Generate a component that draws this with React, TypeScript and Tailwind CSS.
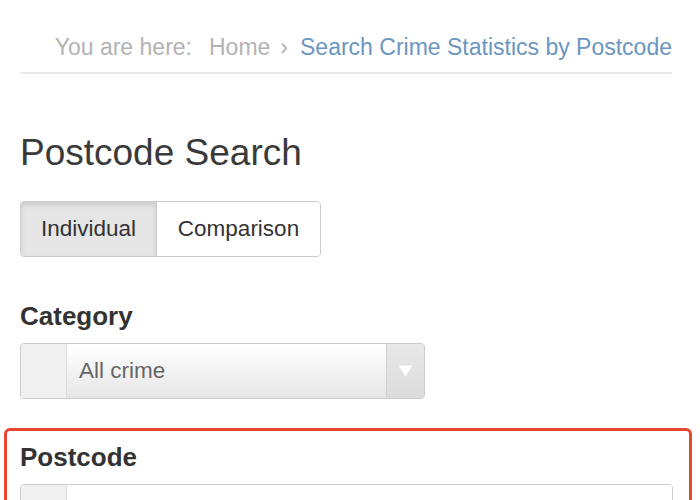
export default function App() {
  return (
    <div className="w-[700px] h-[500px] overflow-hidden bg-white font-['Liberation_Sans',Arial,sans-serif] text-[#333]">
      <div className="pl-5 pr-[28px]">
        <div className="pt-[33px] pb-[11px] border-b-2 border-[#ebebeb] flex justify-end items-baseline text-[23px] leading-[28px]">
          <span className="text-[#b3b3b3]">You are here:</span>
          <span className="text-[#b3b3b3] ml-[17px]">Home</span>
          <span className="text-[#b3b3b3] ml-[10px]">›</span>
          <span className="text-[#6b96c1] ml-[12px]">Search Crime Statistics by Postcode</span>
        </div>

        <h1 className="mt-[56px] text-[37px] leading-[46px] font-light text-[#3a3a3a]">Postcode Search</h1>

        <div className="mt-[25px] inline-flex h-[56px] rounded-[4px] border border-[#ccc] overflow-hidden text-[22.5px]">
          <button className="w-[136px] bg-[#e6e6e6] shadow-[inset_0_3px_5px_rgba(0,0,0,0.125)] border-r border-[#ccc] text-[#333]">Individual</button>
          <button className="w-[163px] bg-white text-[#333]">Comparison</button>
        </div>

        <label className="block mt-[44px] text-[26px] leading-[30px] font-bold text-[#333]">Category</label>

        <div className="mt-[12px] w-[405px] h-[56px] flex rounded-[4px] border border-[#ccc] overflow-hidden">
          <div className="w-[46px] bg-[#f0f0f0] border-r border-[#ddd]" />
          <div className="flex-1 flex items-center pl-[12px] bg-gradient-to-b from-white to-[#e6e6e6] text-[22.5px] text-[#666]">All crime</div>
          <div className="w-[38px] flex items-center justify-center bg-gradient-to-b from-[#e8e8e8] to-[#dcdcdc] border-l border-[#d0d0d0]">
            <svg width="15" height="12" viewBox="0 0 15 12"><path d="M0.5 0.5 L14.5 0.5 L7.5 11.5 Z" fill="#fff" /></svg>
          </div>
        </div>
      </div>

      <div className="mt-[29px] ml-[4px] w-[688px] h-[100px] border-[3px] border-[#e8472f] rounded-[6px] pl-[13px] pr-[16px]">
        <label className="block mt-[11px] text-[26px] leading-[30px] font-bold text-[#333]">Postcode</label>
        <div className="mt-[12px] h-[56px] flex rounded-[4px] border border-[#ccc] overflow-hidden">
          <div className="w-[46px] bg-[#f0f0f0] border-r border-[#ddd]" />
          <div className="flex-1 bg-white" />
        </div>
      </div>
    </div>
  );
}
